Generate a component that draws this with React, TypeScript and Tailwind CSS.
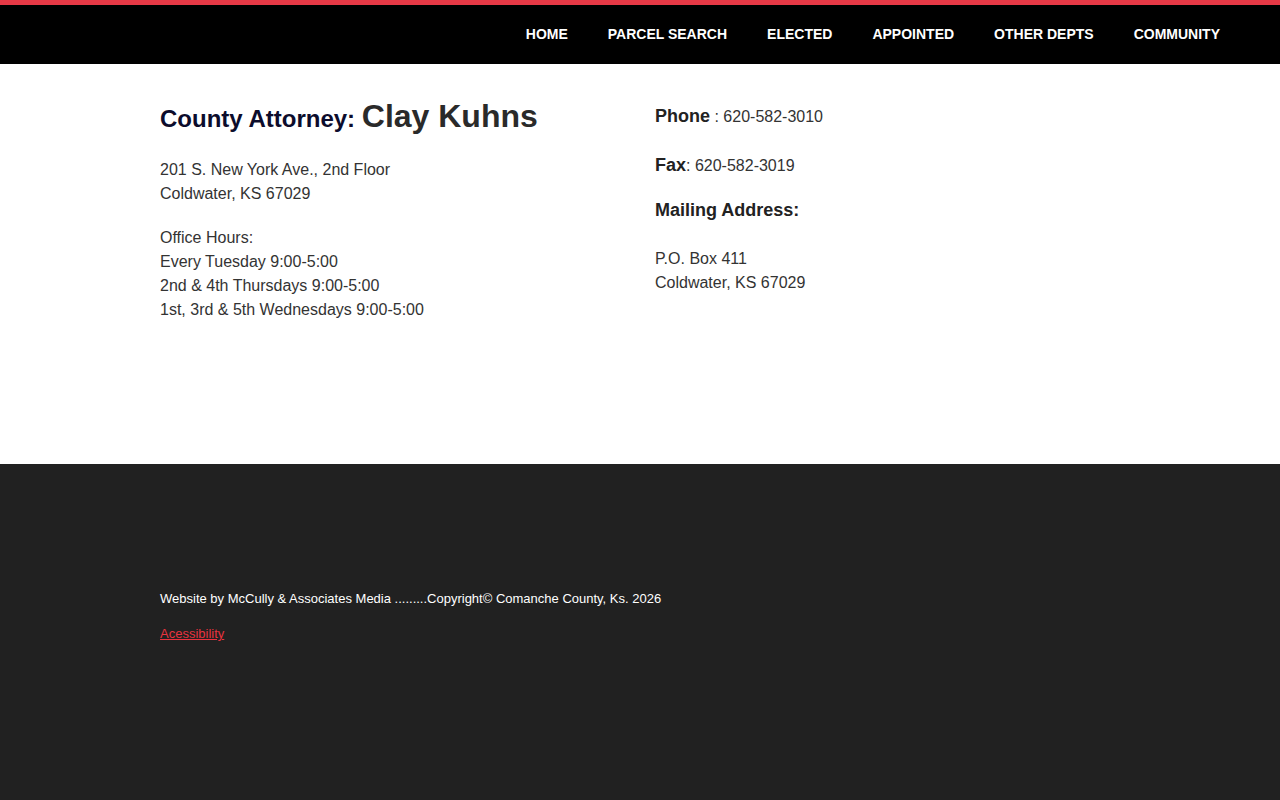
export default function App() {
  const nav = ["HOME", "PARCEL SEARCH", "ELECTED", "APPOINTED", "OTHER DEPTS", "COMMUNITY"];
  return (
    <div className="min-h-[800px] bg-white font-['Liberation_Sans',Arial,sans-serif]">
      <header className="border-t-[5px] border-[#e63946] bg-black">
        <nav className="flex h-[59px] items-center justify-end pr-[40px]">
          {nav.map((item) => (
            <a key={item} href="#" className="px-[20px] text-[14px] font-bold text-white">
              {item}
            </a>
          ))}
        </nav>
      </header>

      <main className="flex h-[400px] px-[160px] text-[16px] leading-[24px] text-[#333]">
        <div className="w-[495px] pt-[40px]">
          <h1 className="flex items-baseline font-bold">
            <span className="text-[24px] text-[#0c0c2c]">County Attorney:&nbsp;</span>
            <span className="text-[32px] text-[#2a2a2a]">Clay Kuhns</span>
          </h1>
          <p className="mt-[27px]">
            201 S. New York Ave., 2nd Floor
            <br />
            Coldwater, KS 67029
          </p>
          <p className="mt-[20px]">
            Office Hours:
            <br />
            Every Tuesday 9:00-5:00
            <br />
            2nd &amp; 4th Thursdays 9:00-5:00
            <br />
            1st, 3rd &amp; 5th Wednesdays 9:00-5:00
          </p>
        </div>
        <div className="pt-[40px]">
          <p>
            <span className="text-[18px] font-bold text-[#222]">Phone</span> : 620-582-3010
          </p>
          <p className="mt-[24px]">
            <span className="text-[18px] font-bold text-[#222]">Fax</span>: 620-582-3019
          </p>
          <h3 className="mt-[20px] text-[18px] font-bold text-[#222]">Mailing Address:</h3>
          <p className="mt-[25px]">
            P.O. Box 411
            <br />
            Coldwater, KS 67029
          </p>
        </div>
      </main>

      <footer className="h-[336px] bg-[#212121] px-[160px] pt-[127px] text-[13px] leading-[16px]">
        <p className="text-white">
          Website by McCully &amp; Associates Media .........Copyright© Comanche County, Ks. 2026
        </p>
        <p className="mt-[19px]">
          <a href="#" className="text-[#e8333f] underline">
            Acessibility
          </a>
        </p>
      </footer>
    </div>
  );
}
